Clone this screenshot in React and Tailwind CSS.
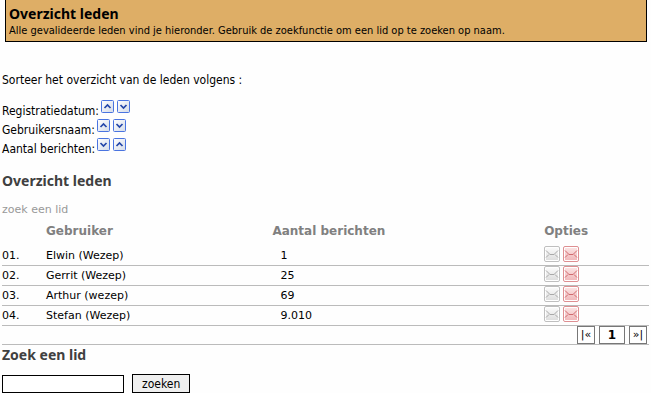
import React, { useState } from 'react'

const members = [
  { id: '01.', name: 'Elwin (Wezep)', posts: '1' },
  { id: '02.', name: 'Gerrit (Wezep)', posts: '25' },
  { id: '03.', name: 'Arthur (wezep)', posts: '69' },
  { id: '04.', name: 'Stefan (Wezep)', posts: '9.010' },
]

const sortFields = [
  { label: 'Registratiedatum:', order: ['up', 'down'] },
  { label: 'Gebruikersnaam:', order: ['up', 'down'] },
  { label: 'Aantal berichten:', order: ['down', 'up'] },
]

function SortIcon({ direction }) {
  return (
    <svg className="block w-[14px] h-[14px]" viewBox="0 0 14 14" aria-hidden="true">
      <defs>
        <linearGradient id={'sort-' + direction} x1="0" y1="0" x2="1" y2="1">
          <stop offset="0" stopColor="#ffffff" />
          <stop offset="1" stopColor="#d3dbe8" />
        </linearGradient>
      </defs>
      <rect x="0.5" y="0.5" width="12" height="12" rx="1" fill={`url(#sort-${direction})`} stroke="#4a74e0" />
      <path
        d={direction === 'up' ? 'M3.5 8 L6.5 5 L9.5 8' : 'M3.5 5 L6.5 8 L9.5 5'}
        fill="none"
        stroke="#2346a8"
        strokeWidth="1.7"
      />
    </svg>
  )
}

function MailIcon({ color }) {
  const red = color === 'red'
  const line = red ? '#d06a6e' : '#a9a9a9'
  return (
    <svg className="block w-4 h-4" viewBox="0 0 16 16" aria-hidden="true">
      <defs>
        <linearGradient id={'mail-' + color} x1="0" y1="0" x2="0" y2="1">
          <stop offset="0" stopColor={red ? '#fbe3e3' : '#fafafa'} />
          <stop offset="1" stopColor={red ? '#f0b8ba' : '#dedede'} />
        </linearGradient>
      </defs>
      <rect x="0.5" y="0.5" width="15" height="15" rx="1.5" fill="#fff" stroke={red ? '#de8f92' : '#bfbfbf'} />
      <rect x="2" y="2" width="12" height="12" fill={`url(#mail-${color})`} />
      <path d="M2 4.5 L6 8.5 H10 L14 4.5 M2 11.5 L5 8.5 M14 11.5 L11 8.5" fill="none" stroke={line} />
    </svg>
  )
}

function PageButton({ label, wide, children }) {
  return (
    <button
      aria-label={label}
      className={
        'h-[18px] border border-[#777] bg-white leading-4 cursor-pointer ' +
        (wide ? 'w-[26px] text-[12px] font-bold' : 'w-[18px] text-[11px]')
      }
    >
      {children}
    </button>
  )
}

function App() {
  const [search, setSearch] = useState('')

  return (
    <div className="pl-[2px] pr-[2px] bg-[#fefefe] text-black text-[12px] font-['DejaVu_Sans_Condensed','DejaVu_Sans',sans-serif]">
      <header className="ml-[3px] mr-[2px] px-[3px] pt-1 pb-[3px] border border-t-0 border-black bg-[#deae66]">
        <h1 className="text-[14px] leading-5 font-bold font-['Noto_Sans',sans-serif]">Overzicht leden</h1>
        <p className="text-[11px] leading-[14px]">
          Alle gevalideerde leden vind je hieronder. Gebruik de zoekfunctie om een lid op te zoeken op naam.
        </p>
      </header>

      <p className="mt-[30px] leading-4">Sorteer het overzicht van de leden volgens :</p>

      {/* Sorteerknoppen */}
      <div className="mt-3">
        {sortFields.map((field) => (
          <div key={field.label} className="flex items-start gap-[2px] h-[19px]">
            <span className="pt-[3px] leading-4">{field.label}</span>
            {field.order.map((direction) => (
              <button
                key={direction}
                aria-label={field.label + ' ' + (direction === 'up' ? 'oplopend' : 'aflopend')}
                className="cursor-pointer"
              >
                <SortIcon direction={direction} />
              </button>
            ))}
          </div>
        ))}
      </div>

      <h2 className="mt-[14px] text-[14px] leading-5 font-bold text-[#404040] font-['Noto_Sans',sans-serif]">
        Overzicht leden
      </h2>

      <div className="mt-[11px] text-[11px] font-['DejaVu_Sans',sans-serif]">
        <a href="#zoeken" className="block w-fit leading-4 text-[#999]">zoek een lid</a>

        <table className="mt-[3px] w-full table-fixed border-separate border-spacing-0">
          <thead>
            <tr className="h-[25px] text-left align-top text-[12px] leading-[21px] text-[#808080]">
              <th className="w-11 p-0" aria-label="Nummer"></th>
              <th className="w-[35%] p-0">Gebruiker</th>
              <th className="w-[42%] p-0">Aantal berichten</th>
              <th className="p-0">Opties</th>
            </tr>
          </thead>
          <tbody>
            {members.map((member) => (
              <tr key={member.id} className="h-5 align-top leading-[18px] *:border-b *:border-[#bbb]">
                <td className="p-0 pt-[1px]">{member.id}</td>
                <td className="p-0 pt-[1px]">{member.name}</td>
                <td className="p-0 pt-[1px] pl-2">{member.posts}</td>
                <td className="p-0">
                  <div className="flex gap-[3px]">
                    <button aria-label="Stuur een bericht" className="cursor-pointer">
                      <MailIcon color="gray" />
                    </button>
                    <button aria-label="Stuur een e-mail" className="cursor-pointer">
                      <MailIcon color="red" />
                    </button>
                  </div>
                </td>
              </tr>
            ))}
          </tbody>
        </table>

        {/* Paginering */}
        <nav className="flex justify-end gap-1 pr-[2px] border-b border-[#bbb]">
          <PageButton label="Eerste pagina">|«</PageButton>
          <PageButton label="Pagina 1" wide>1</PageButton>
          <PageButton label="Laatste pagina">»|</PageButton>
        </nav>
      </div>

      <form id="zoeken" onSubmit={(e) => e.preventDefault()}>
        <h2 className="text-[14px] leading-5 font-bold text-[#404040] font-['Noto_Sans',sans-serif]">
          <label htmlFor="lid">Zoek een lid</label>
        </h2>
        <div className="mt-[9px] flex items-end gap-2">
          <input
            id="lid"
            type="text"
            value={search}
            onChange={(e) => setSearch(e.target.value)}
            className="w-[122px] h-[18px] px-1 border border-black bg-white"
          />
          <button
            type="submit"
            className="h-[19px] px-[9px] border border-black bg-[#efefef] leading-4 cursor-pointer"
          >
            zoeken
          </button>
        </div>
      </form>
    </div>
  )
}

export default App
